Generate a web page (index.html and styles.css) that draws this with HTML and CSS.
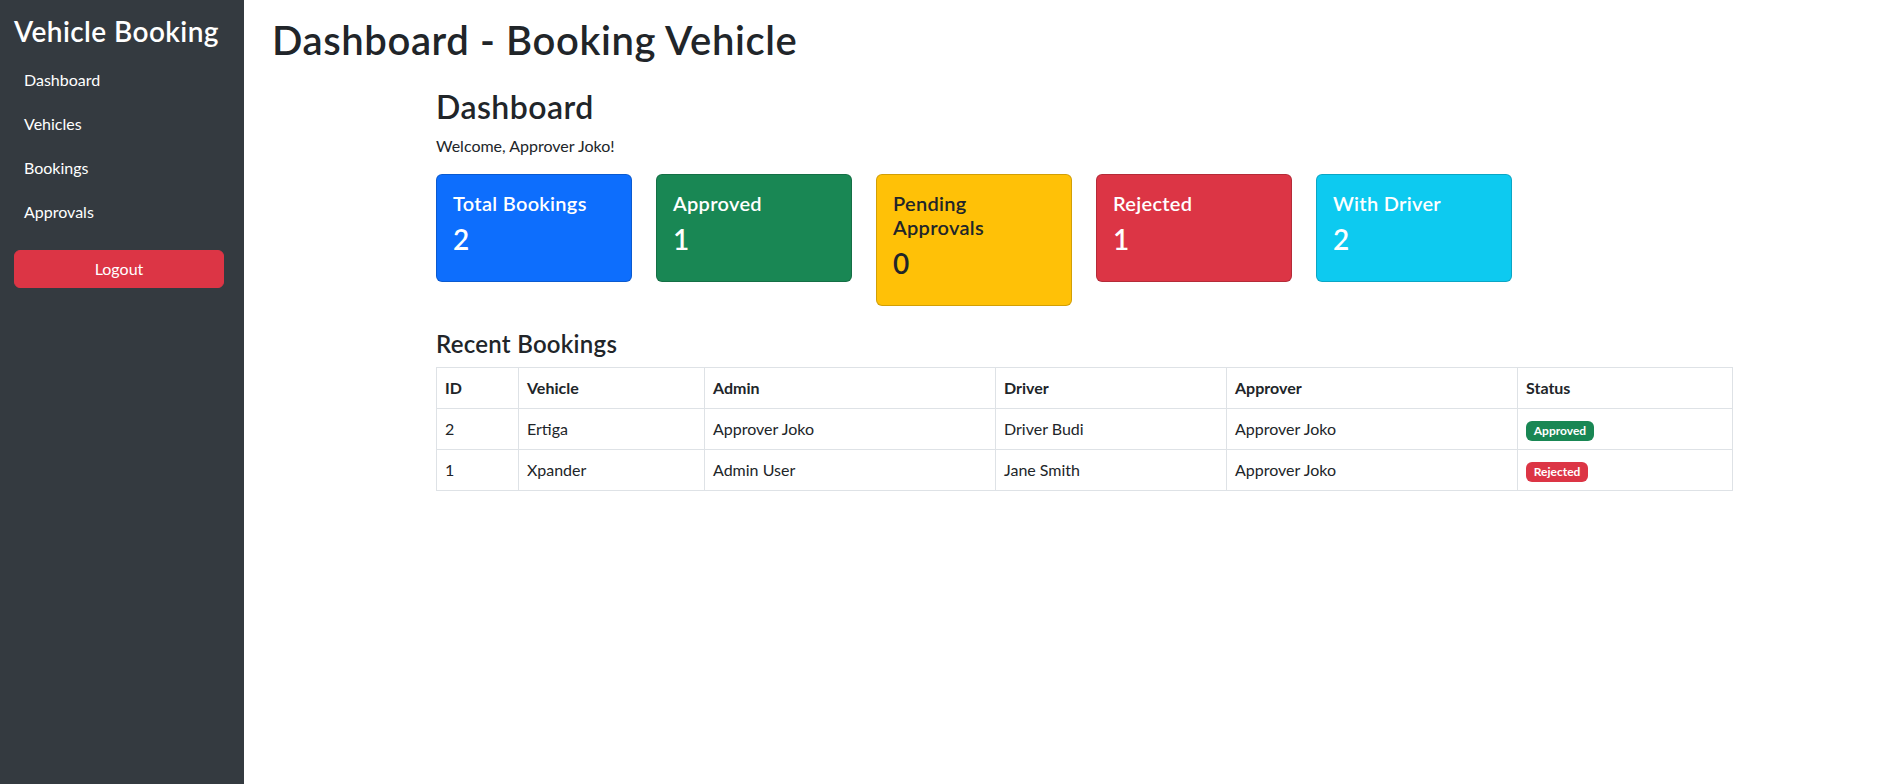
FILE: index.html
```html
<!DOCTYPE html>
<html lang="en">
<head>
<meta charset="utf-8">
<title>Dashboard - Booking Vehicle</title>
<link rel="stylesheet" href="styles.css">
</head>
<body>
<div class="layout">
  <aside class="sidebar">
    <h3 class="brand">Vehicle Booking</h3>
    <ul class="nav">
      <li><a class="nav-link" href="#">Dashboard</a></li>
      <li><a class="nav-link" href="#">Vehicles</a></li>
      <li><a class="nav-link" href="#">Bookings</a></li>
      <li><a class="nav-link" href="#">Approvals</a></li>
    </ul>
    <button class="btn-logout" type="button">Logout</button>
  </aside>
  <main class="main">
    <h1 class="page-title">Dashboard - Booking Vehicle</h1>
    <div class="container">
      <h2 class="section-title">Dashboard</h2>
      <p class="welcome">Welcome, Approver Joko!</p>
      <div class="stats">
        <div class="stat-card card-primary">
          <h5 class="stat-title">Total Bookings</h5>
          <h3 class="stat-value">2</h3>
        </div>
        <div class="stat-card card-success">
          <h5 class="stat-title">Approved</h5>
          <h3 class="stat-value">1</h3>
        </div>
        <div class="stat-card card-warning">
          <h5 class="stat-title">Pending Approvals</h5>
          <h3 class="stat-value">0</h3>
        </div>
        <div class="stat-card card-danger">
          <h5 class="stat-title">Rejected</h5>
          <h3 class="stat-value">1</h3>
        </div>
        <div class="stat-card card-info">
          <h5 class="stat-title">With Driver</h5>
          <h3 class="stat-value">2</h3>
        </div>
      </div>
      <h4 class="table-title">Recent Bookings</h4>
      <table class="bookings">
        <colgroup>
          <col class="c-id">
          <col class="c-vehicle">
          <col class="c-admin">
          <col class="c-driver">
          <col class="c-approver">
          <col class="c-status">
        </colgroup>
        <thead>
          <tr>
            <th>ID</th>
            <th>Vehicle</th>
            <th>Admin</th>
            <th>Driver</th>
            <th>Approver</th>
            <th>Status</th>
          </tr>
        </thead>
        <tbody>
          <tr>
            <td>2</td>
            <td>Ertiga</td>
            <td>Approver Joko</td>
            <td>Driver Budi</td>
            <td>Approver Joko</td>
            <td><span class="badge badge-success">Approved</span></td>
          </tr>
          <tr>
            <td>1</td>
            <td>Xpander</td>
            <td>Admin User</td>
            <td>Jane Smith</td>
            <td>Approver Joko</td>
            <td><span class="badge badge-danger">Rejected</span></td>
          </tr>
        </tbody>
      </table>
    </div>
  </main>
</div>
</body>
</html>
```

FILE: styles.css
```css
* {
  box-sizing: border-box;
}

html, body {
  margin: 0;
  padding: 0;
}

body {
  font-family: Lato, "Open Sans", "Liberation Sans", sans-serif;
  font-size: 16px;
  line-height: 1.5;
  color: #212529;
  background: #fff;
}

.layout {
  display: flex;
  min-height: 784px;
}

/* Sidebar */
.sidebar {
  flex: 0 0 244px;
  width: 244px;
  background: #343a40;
  padding: 15px 20px 0 14px;
}

.brand {
  margin: 0 0 11px;
  font-size: 28px;
  font-weight: 600;
  line-height: 1.2;
  letter-spacing: 0.015em;
  color: #fff;
}

.nav {
  list-style: none;
  margin: 0 0 18px;
  padding: 0;
  display: flex;
  flex-direction: column;
  gap: 4px;
}

.nav-link {
  display: block;
  padding: 8px 10px;
  color: #fff;
  text-decoration: none;
  font-size: 16px;
  line-height: 24px;
}

.btn-logout {
  display: block;
  width: 210px;
  height: 38px;
  padding: 6px 12px;
  border: 1px solid #dc3545;
  border-radius: 6px;
  background: #dc3545;
  color: #fff;
  font-family: inherit;
  font-size: 16px;
  line-height: 24px;
  text-align: center;
  cursor: pointer;
}

/* Main */
.main {
  flex: 1 1 auto;
  padding: 16px 0 0 28px;
}

.page-title {
  margin: 0;
  font-size: 40px;
  font-weight: 600;
  line-height: 1.2;
  letter-spacing: 0.015em;
}

.container {
  width: 1296px;
  margin: 24px 0 0 164px;
}

.section-title {
  margin: 0 0 8px;
  font-size: 32px;
  font-weight: 600;
  line-height: 1.2;
  letter-spacing: 0.014em;
}

.welcome {
  margin: 0 0 16px;
}

/* Stat cards */
.stats {
  display: flex;
  align-items: flex-start;
  gap: 24px;
  margin-bottom: 24px;
}

.stat-card {
  width: 196px;
  padding: 16px;
  border: 1px solid rgba(0, 0, 0, 0.175);
  border-radius: 6px;
  color: #fff;
}

.stat-title {
  margin: 0 0 8px;
  font-size: 20px;
  font-weight: 600;
  line-height: 1.2;
  letter-spacing: 0.015em;
}

.stat-value {
  margin: 0 0 8px;
  font-size: 28px;
  font-weight: 600;
  line-height: 1.2;
}

.card-primary { background: #0d6efd; }
.card-success { background: #198754; }
.card-warning { background: #ffc107; color: #212529; }
.card-danger  { background: #dc3545; }
.card-info    { background: #0dcaf0; }

/* Table */
.table-title {
  margin: 0 0 8px;
  font-size: 24px;
  font-weight: 600;
  line-height: 1.2;
  letter-spacing: 0.011em;
}

.bookings {
  width: 1296px;
  border-collapse: collapse;
  table-layout: fixed;
}

.c-id { width: 82px; }
.c-vehicle { width: 186px; }
.c-admin { width: 291px; }
.c-driver { width: 231px; }
.c-approver { width: 291px; }
.c-status { width: 215px; }

.bookings th,
.bookings td {
  padding: 8px;
  border: 1px solid #dee2e6;
  text-align: left;
  vertical-align: top;
  line-height: 24px;
  font-size: 16px;
  color: #212529;
}

.bookings th {
  font-weight: 700;
}

.badge {
  display: inline-block;
  padding: 0.35em 0.65em;
  font-size: 0.75em;
  font-weight: 700;
  line-height: 1;
  color: #fff;
  white-space: nowrap;
  vertical-align: baseline;
  border-radius: 6px;
}

.badge-success { background: #198754; }
.badge-danger  { background: #dc3545; }
```
